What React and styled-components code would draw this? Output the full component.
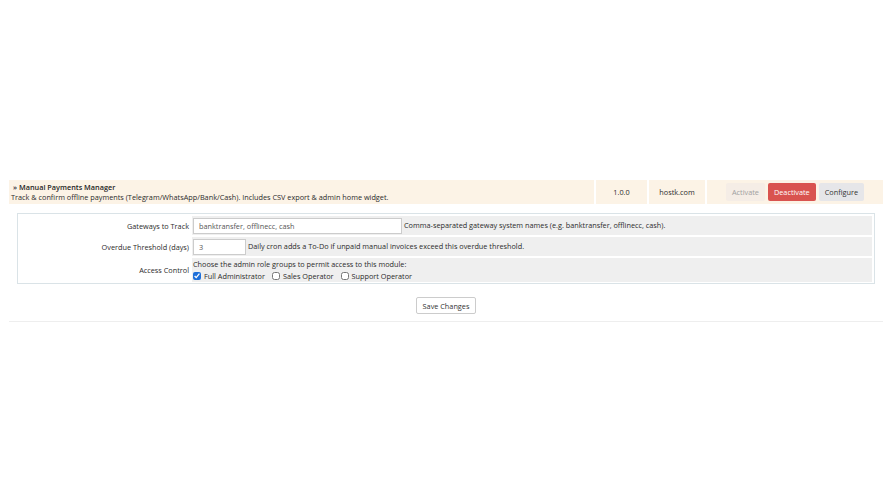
import React, { useState } from "react";
import styled, { createGlobalStyle } from "styled-components";

const GlobalStyle = createGlobalStyle`
  html, body {
    margin: 0;
    padding: 0;
    background: #fff;
  }
  body {
    font-family: "Open Sans", "Liberation Sans", sans-serif;
    font-size: 7.3px;
    color: #2b2b2b;
  }
`;

const Page = styled.div`
  padding: 180px 9px 0 9px;
  width: 892px;
  box-sizing: border-box;
`;

const ModuleRow = styled.div`
  display: grid;
  grid-template-columns: 1fr 53px 58px 178px;
  background: #fcf3e6;
  height: 24px;
`;

const Cell = styled.div`
  display: flex;
  justify-content: center;
  flex-direction: ${(p) => (p.$left ? "column" : "row")};
  align-items: ${(p) => (p.$left ? "flex-start" : "center")};
  padding: ${(p) => (p.$left ? "0 2px" : "0")};
  border-left: ${(p) => (p.$left ? "none" : "2px solid #fff")};
  line-height: 10px;
  gap: ${(p) => (p.$left ? "0" : "3px")};
`;

const Title = styled.strong`
  font-weight: 600;
  padding-left: 2px;
  color: #1f1f1f;
`;

const ActionBtn = styled.button`
  font-family: inherit;
  font-size: 7.3px;
  border: none;
  border-radius: 2px;
  height: 18px;
  padding: 0 6px;
  cursor: pointer;
  background: ${(p) =>
    p.$variant === "danger" ? "#d9534f" : p.$variant === "disabled" ? "#f5ede6" : "#e6e6e9"};
  color: ${(p) =>
    p.$variant === "danger" ? "#fff" : p.$variant === "disabled" ? "#a0a0a0" : "#333"};
`;

const Panel = styled.div`
  margin: 9px 8px 0 8px;
  border: 1px solid #dae3e7;
  padding: 2px 2px 1px;
  display: grid;
  grid-template-columns: 171px 1fr;
  gap: 2px 1px;
  background: #fff;
`;

const Label = styled.div`
  display: flex;
  align-items: center;
  justify-content: flex-end;
  padding-right: 2px;
  height: ${(p) => p.$h || 19}px;
`;

const Field = styled.div`
  background: #efefef;
  display: flex;
  flex-direction: ${(p) => (p.$stack ? "column" : "row")};
  align-items: ${(p) => (p.$stack ? "flex-start" : "center")};
  justify-content: ${(p) => (p.$stack ? "center" : "flex-start")};
  padding: 0 1px;
  gap: 1px;
  height: ${(p) => p.$h || 19}px;
  line-height: 11px;
`;

const Row = styled.div`
  display: flex;
  align-items: center;
  justify-content: flex-start;
  gap: 2px;
`;

const TextInput = styled.input`
  font-family: inherit;
  font-size: 7.3px;
  color: #555;
  height: 16px;
  box-sizing: border-box;
  width: ${(p) => p.$w}px;
  border: 1px solid #ccc;
  background: #fff;
  padding: 0 5px;
  margin: 0;
  outline: none;
`;

const CheckLabel = styled.label`
  display: inline-flex;
  align-items: center;
  gap: 3px;
  margin-right: 5px;
`;

const Box = styled.input`
  width: 8px;
  height: 8px;
  margin: 0;
  accent-color: #1e6fd9;
`;

const SaveWrap = styled.div`
  display: flex;
  justify-content: center;
  padding: 13px 0 7px;
  border-bottom: 1px solid #eee;
`;

const SaveBtn = styled.button`
  font-family: inherit;
  font-size: 7.3px;
  color: #333;
  background: #fff;
  border: 1px solid #ccc;
  border-radius: 2px;
  height: 17px;
  padding: 0 6px;
`;

export default function App() {
  const [roles, setRoles] = useState({ full: true, sales: false, support: false });
  const toggle = (k) => setRoles((r) => ({ ...r, [k]: !r[k] }));

  return (
    <>
      <GlobalStyle />
      <Page>
        <ModuleRow>
          <Cell $left>
            <Title>» Manual Payments Manager</Title>
            <span>
              Track &amp; confirm offline payments (Telegram/WhatsApp/Bank/Cash). Includes CSV
              export &amp; admin home widget.
            </span>
          </Cell>
          <Cell>1.0.0</Cell>
          <Cell>hostk.com</Cell>
          <Cell>
            <ActionBtn $variant="disabled">Activate</ActionBtn>
            <ActionBtn $variant="danger">Deactivate</ActionBtn>
            <ActionBtn>Configure</ActionBtn>
          </Cell>
        </ModuleRow>

        <Panel>
          <Label>Gateways to Track</Label>
          <Field>
            <Row>
              <TextInput $w={209} defaultValue="banktransfer, offlinecc, cash" />
              <span>Comma-separated gateway system names (e.g. banktransfer, offlinecc, cash).</span>
            </Row>
          </Field>

          <Label>Overdue Threshold (days)</Label>
          <Field>
            <Row>
              <TextInput $w={53} defaultValue="3" />
              <span>Daily cron adds a To-Do if unpaid manual invoices exceed this overdue threshold.</span>
            </Row>
          </Field>

          <Label $h={24}>Access Control</Label>
          <Field $stack $h={24}>
            <span>Choose the admin role groups to permit access to this module:</span>
            <Row>
              <CheckLabel>
                <Box type="checkbox" checked={roles.full} onChange={() => toggle("full")} />
                Full Administrator
              </CheckLabel>
              <CheckLabel>
                <Box type="checkbox" checked={roles.sales} onChange={() => toggle("sales")} />
                Sales Operator
              </CheckLabel>
              <CheckLabel>
                <Box type="checkbox" checked={roles.support} onChange={() => toggle("support")} />
                Support Operator
              </CheckLabel>
            </Row>
          </Field>
        </Panel>

        <SaveWrap>
          <SaveBtn>Save Changes</SaveBtn>
        </SaveWrap>
      </Page>
    </>
  );
}
